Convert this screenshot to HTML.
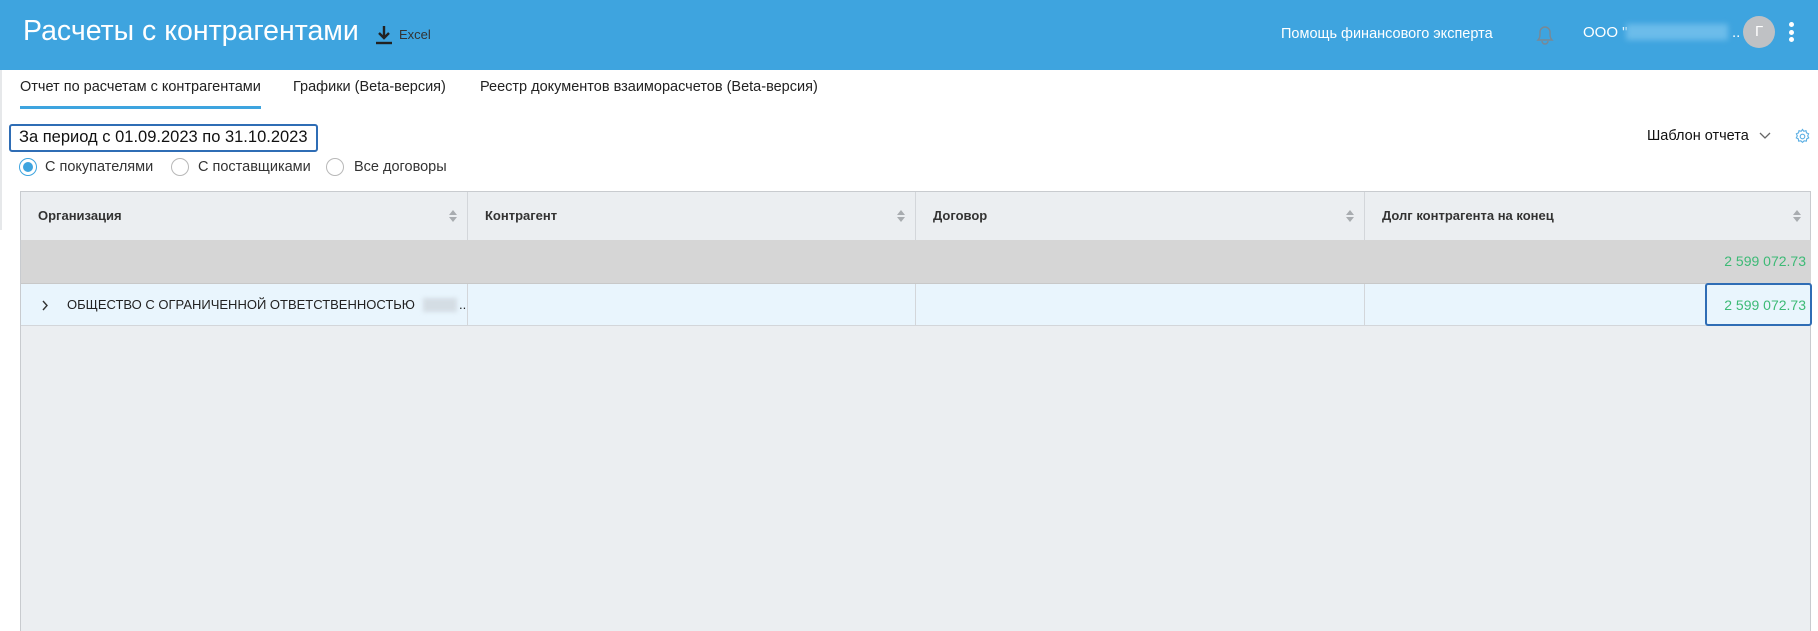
<!DOCTYPE html>
<html><head><meta charset="utf-8"><style>
*{box-sizing:border-box;margin:0;padding:0}
body{width:1818px;height:631px;overflow:hidden;background:#fff;font-family:"Liberation Sans","DejaVu Sans",sans-serif;position:relative;color:#222}
.a{position:absolute;white-space:nowrap}
.hdr{position:absolute;left:0;top:0;width:1818px;height:70px;background:#3ea4df}
.blur{position:absolute;background:#6cbcea;filter:blur(3px)}
.radio{position:absolute;width:18px;height:18px;border-radius:50%;border:1px solid #b8b8b8;background:#fff}
.tbl{position:absolute;left:20px;top:191px;width:1791px;height:440px;background:#ebeef1;border:1px solid #c8cbcf;border-bottom:none}
.th{position:absolute;top:0;height:48px;border-right:1px solid #d3d6da;font-size:13px;font-weight:bold;color:#333;line-height:48px;padding-left:17px}
.sort{position:absolute;right:10px;top:17px;width:8px;height:14px}
.cell{position:absolute;top:92px;height:42px;border-right:1px solid #d3d6da}
.green{color:#3dba76;font-size:14px}
</style></head><body>
<div class="hdr"></div>
<div class="a" style="left:23px;top:15px;font-size:28.5px;color:#fff">Расчеты с контрагентами</div>
<svg class="a" style="left:373px;top:24px" width="22" height="22" viewBox="0 0 22 22"><path d="M11 2v12M6 9l5 5 5-5" stroke="#222" stroke-width="2.4" fill="none"/><path d="M3 19h16" stroke="#222" stroke-width="2.4"/></svg>
<div class="a" style="left:399px;top:27px;font-size:13px;color:#333">Excel</div>
<div class="a" style="left:1281px;top:26px;font-size:14.5px;color:#fff">Помощь финансового эксперта</div>
<svg class="a" style="left:1534px;top:22px" width="22" height="24" viewBox="0 0 22 24"><path d="M4 18c2-2 2-4 2-8a5 5 0 0 1 10 0c0 4 0 6 2 8zM8 19a3 3 0 0 0 6 0" stroke="#7a8894" stroke-width="1.4" fill="none"/></svg>
<div class="a" style="left:1583px;top:24px;font-size:15px;color:#fff">ООО "</div>
<div class="blur" style="left:1626px;top:24px;width:102px;height:16px"></div>
<div class="a" style="left:1732px;top:24px;font-size:15px;color:#fff">..</div>
<div class="a" style="left:1743px;top:16px;width:32px;height:32px;border-radius:50%;background:#bfc1c4;color:#fff;font-size:15px;text-align:center;line-height:32px">Г</div>
<div class="a" style="left:1789px;top:22px;width:5px;height:5px;border-radius:50%;background:#fff"></div>
<div class="a" style="left:1789px;top:30px;width:5px;height:5px;border-radius:50%;background:#fff"></div>
<div class="a" style="left:1789px;top:37px;width:5px;height:5px;border-radius:50%;background:#fff"></div>
<div class="a" style="left:0;top:70px;width:2px;height:160px;background:#e6e8ea"></div>

<div class="a" style="left:20px;top:79px;font-size:14.5px;color:#222">Отчет по расчетам с контрагентами</div>
<div class="a" style="left:20px;top:106px;width:241px;height:3px;background:#3ea4df"></div>
<div class="a" style="left:293px;top:79px;font-size:14.5px;color:#222">Графики (Beta-версия)</div>
<div class="a" style="left:480px;top:79px;font-size:14.5px;color:#222">Реестр документов взаиморасчетов (Beta-версия)</div>

<div class="a" style="left:9px;top:124px;width:309px;height:28px;border:2px solid #2f6db5;border-radius:3px"></div>
<div class="a" style="left:19px;top:128px;font-size:16.5px;color:#111">За период с 01.09.2023 по 31.10.2023</div>
<div class="radio" style="left:19px;top:158px;border-color:#3ea4df"><div style="position:absolute;left:3px;top:3px;width:10px;height:10px;border-radius:50%;background:#3ea4df"></div></div>
<div class="a" style="left:45px;top:159px;font-size:14.5px;color:#333">С покупателями</div>
<div class="radio" style="left:171px;top:158px"></div>
<div class="a" style="left:198px;top:159px;font-size:14.5px;color:#333">С поставщиками</div>
<div class="radio" style="left:326px;top:158px"></div>
<div class="a" style="left:354px;top:159px;font-size:14.5px;color:#333">Все договоры</div>

<div class="a" style="left:1647px;top:128px;font-size:14.5px;color:#111">Шаблон отчета</div>
<svg class="a" style="left:1759px;top:132px" width="12" height="8" viewBox="0 0 12 8"><path d="M1 1l5 5 5-5" stroke="#666" stroke-width="1.3" fill="none"/></svg>
<svg class="a" style="left:1794px;top:128px" width="17" height="17" viewBox="0 0 17 17"><circle cx="8.5" cy="8.5" r="2.3" stroke="#5aaee3" stroke-width="1.1" fill="none"/><path d="M8.5 1.5l1.3 1.8 2.2-.6.5 2.2 2.1.9-.9 2.1 1 2-2 1-.3 2.2-2.3-.3-1.6 1.6-1.6-1.6-2.3.3-.3-2.2-2-1 1-2-.9-2.1 2.1-.9.5-2.2 2.2.6z" stroke="#5aaee3" stroke-width="1.1" fill="none"/></svg>

<div class="tbl">
<div class="th" style="left:0;width:447px">Организация<svg class="sort" viewBox="0 0 8 14"><path d="M0 6L4 1l4 5zM0 8l4 5 4-5z" fill="#a8acb0"/></svg></div>
<div class="th" style="left:447px;width:448px">Контрагент<svg class="sort" viewBox="0 0 8 14"><path d="M0 6L4 1l4 5zM0 8l4 5 4-5z" fill="#a8acb0"/></svg></div>
<div class="th" style="left:895px;width:449px">Договор<svg class="sort" viewBox="0 0 8 14"><path d="M0 6L4 1l4 5zM0 8l4 5 4-5z" fill="#a8acb0"/></svg></div>
<div class="th" style="left:1344px;width:446px;border-right:none">Долг контрагента на конец<svg class="sort" viewBox="0 0 8 14"><path d="M0 6L4 1l4 5zM0 8l4 5 4-5z" fill="#a8acb0"/></svg></div>
<div class="a" style="left:0;top:48px;width:1790px;height:44px;background:#d6d6d6;border-bottom:1px solid #c8c8c8"></div>
<div class="a green" style="right:4px;top:61px">2 599 072.73</div>
<div class="a" style="left:0;top:92px;width:1790px;height:42px;background:#e9f5fd;border-bottom:1px solid #d3d6da"></div>
<div class="cell" style="left:0;width:447px"></div>
<div class="cell" style="left:447px;width:448px"></div>
<div class="cell" style="left:895px;width:449px"></div>
<svg class="a" style="left:20px;top:108px" width="8" height="11" viewBox="0 0 8 11"><path d="M2 1l4 4.5L2 10" stroke="#333" stroke-width="1.4" fill="none"/></svg>
<div class="a" style="left:46px;top:105px;font-size:13px;color:#222">ОБЩЕСТВО С ОГРАНИЧЕННОЙ ОТВЕТСТВЕННОСТЬЮ</div>
<div class="a" style="left:402px;top:106px;width:34px;height:14px;background:#d4dde4;filter:blur(2px)"></div>
<div class="a" style="left:438px;top:105px;font-size:13px">..</div>
<div class="a" style="left:1684px;top:91px;width:107px;height:43px;border:2px solid #2f6db5;border-radius:3px"></div>
<div class="a green" style="right:4px;top:105px">2 599 072.73</div>
</div>
</body></html>
